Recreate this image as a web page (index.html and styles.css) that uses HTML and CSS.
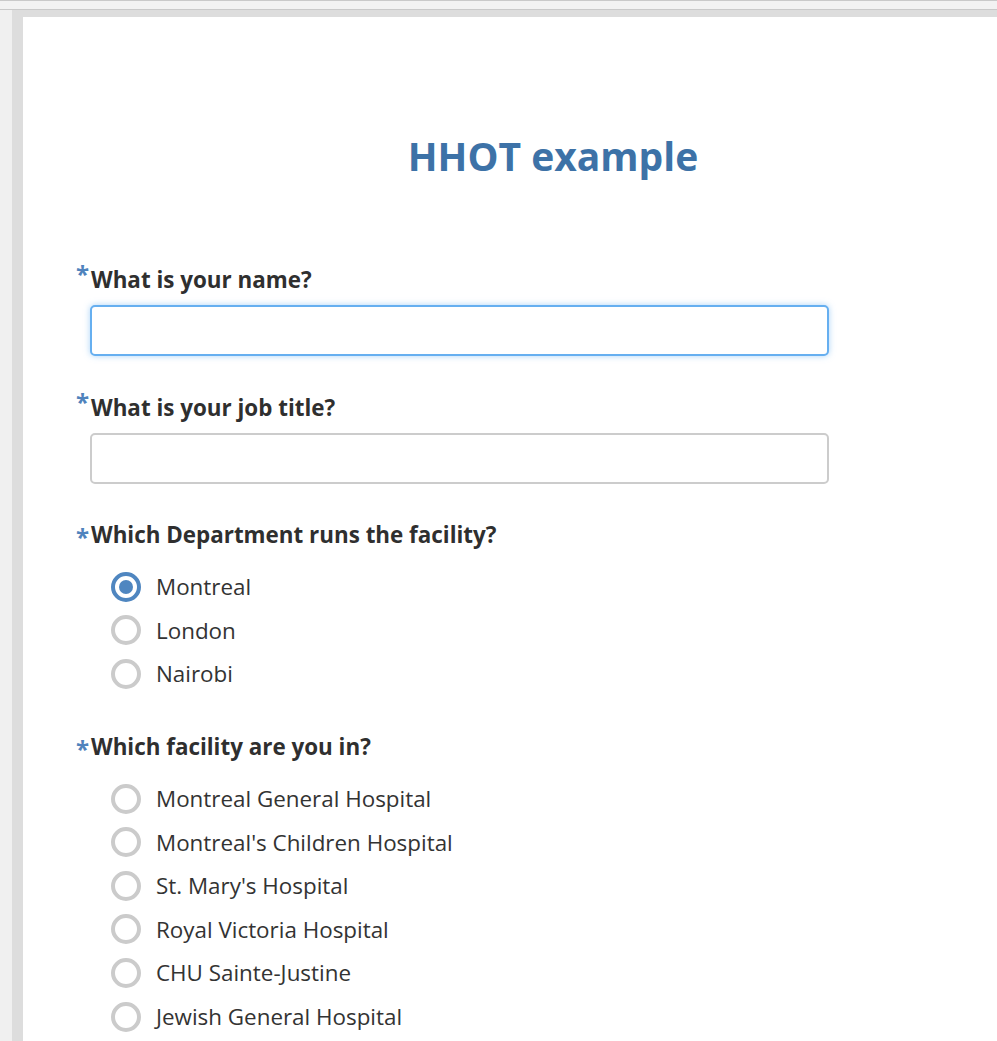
FILE: index.html
```html
<!DOCTYPE html>
<html lang="en">
<head>
<meta charset="utf-8">
<title>HHOT example</title>
<link rel="stylesheet" href="styles.css">
</head>
<body>
<div class="topbar"></div>
<div class="frame">
  <div class="strip"></div>
  <div class="wrap">
    <div class="page">
      <h1 class="title">HHOT example</h1>

      <div class="question">
        <div class="qlabel"><span class="req">*</span>What is your name?</div>
        <input class="text-input focused" type="text">
      </div>

      <div class="question">
        <div class="qlabel"><span class="req">*</span>What is your job title?</div>
        <input class="text-input" type="text">
      </div>

      <div class="question">
        <div class="qlabel"><span class="req req-low">*</span>Which Department runs the facility?</div>
        <div class="options">
          <div class="option"><span class="radio checked"></span><span class="opt-text">Montreal</span></div>
          <div class="option"><span class="radio"></span><span class="opt-text">London</span></div>
          <div class="option"><span class="radio"></span><span class="opt-text">Nairobi</span></div>
        </div>
      </div>

      <div class="question">
        <div class="qlabel"><span class="req req-low">*</span>Which facility are you in?</div>
        <div class="options">
          <div class="option"><span class="radio"></span><span class="opt-text">Montreal General Hospital</span></div>
          <div class="option"><span class="radio"></span><span class="opt-text">Montreal's Children Hospital</span></div>
          <div class="option"><span class="radio"></span><span class="opt-text">St. Mary's Hospital</span></div>
          <div class="option"><span class="radio"></span><span class="opt-text">Royal Victoria Hospital</span></div>
          <div class="option"><span class="radio"></span><span class="opt-text">CHU Sainte-Justine</span></div>
          <div class="option"><span class="radio"></span><span class="opt-text">Jewish General Hospital</span></div>
        </div>
      </div>
    </div>
  </div>
</div>
</body>
</html>
```

FILE: styles.css
```css
html, body {
  margin: 0;
  padding: 0;
  background: #ffffff;
  overflow: hidden;
}

body {
  font-family: "Open Sans", "Noto Sans", sans-serif;
  color: #333333;
}

.topbar {
  height: 8px;
  background: #f2f2f2;
  border-top: 1px solid #c9c9c9;
  border-bottom: 1px solid #c9c9c9;
}

.frame {
  display: flex;
  height: 1031px;
  overflow: hidden;
}

.strip {
  width: 12px;
  background: #f0f0f0;
  flex: none;
}

.wrap {
  flex: 1;
  min-width: 0;
  background: #dddddd;
  padding: 7px 0 0 11px;
  overflow: hidden;
}

.page {
  background: #ffffff;
  height: 1100px;
  width: 1060px;
  padding: 1px 0 0 53px;
  box-sizing: border-box;
}

.title {
  margin: 112px 0 0 0;
  text-align: center;
  padding-right: 53px;
  font-size: 39px;
  line-height: 52px;
  font-weight: 700;
  color: #3d72a7;
}

.qlabel {
  font-size: 22.4px;
  line-height: 30px;
  font-weight: 700;
  color: #2f2f2f;
  margin-top: 82px;
}

.question + .question .qlabel {
  margin-top: 36px;
}

.req {
  color: #4f83bd;
  font-size: 24px;
  display: inline-block;
  width: 15px;
  vertical-align: 5px;
  line-height: 20px;
}

.req.req-low {
  vertical-align: -3px;
}

.text-input {
  display: block;
  margin: 10px 0 0 14px;
  width: 739px;
  height: 51px;
  box-sizing: border-box;
  border: 2px solid #cccccc;
  border-radius: 5px;
  background: #ffffff;
  outline: none;
  padding: 0 12px;
  font-family: inherit;
  font-size: 20px;
}

.text-input.focused {
  border-color: #66aff0;
  box-shadow: 0 0 6px rgba(102, 175, 240, 0.55);
}

.options {
  margin-top: 15px;
  padding-left: 35px;
}

.option {
  display: flex;
  align-items: center;
  height: 43.6px;
}

.radio {
  width: 30px;
  height: 30px;
  box-sizing: border-box;
  border: 4px solid #cbcbcb;
  border-radius: 50%;
  background: #ffffff;
  flex: none;
  position: relative;
}

.radio.checked {
  border-color: #4f86c0;
}

.radio.checked::after {
  content: "";
  position: absolute;
  left: 4px;
  top: 4px;
  width: 14px;
  height: 14px;
  border-radius: 50%;
  background: #4f86c0;
}

.opt-text {
  margin-left: 15px;
  font-size: 22.4px;
  color: #333333;
}
```
